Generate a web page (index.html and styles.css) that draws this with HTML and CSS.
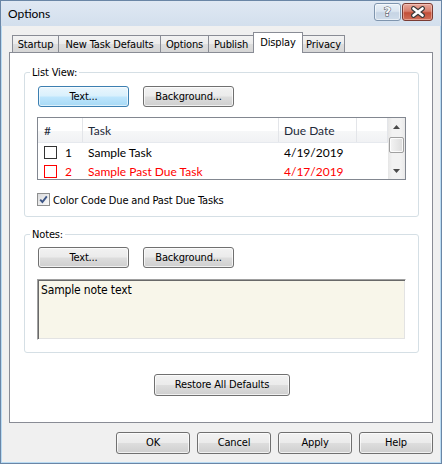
FILE: index.html
```html
<!DOCTYPE html>
<html>
<head>
<meta charset="utf-8">
<title>Options</title>
<link rel="stylesheet" href="styles.css">
</head>
<body>
<div class="window">
  <div class="titlebar">
    <span class="title">Options</span>
    <div class="caps">
      <div class="cap help"><span class="q">?</span></div>
      <div class="cap close">
        <svg width="18" height="12" viewBox="0 0 18 12">
          <path d="M4.5 2.5 L13.5 9.5 M13.5 2.5 L4.5 9.5" stroke="#3a3a3a" stroke-width="4.8" stroke-linecap="round" fill="none"/>
          <path d="M4.5 2.5 L13.5 9.5 M13.5 2.5 L4.5 9.5" stroke="#ffffff" stroke-width="2.6" stroke-linecap="round" fill="none"/>
        </svg>
      </div>
    </div>
  </div>

  <div class="client">
    <div class="tabs">
      <div class="tab w-startup">Startup</div>
      <div class="tab w-ntd">New Task Defaults</div>
      <div class="tab w-options">Options</div>
      <div class="tab w-publish">Publish</div>
      <div class="tab w-display active">Display</div>
      <div class="tab w-privacy">Privacy</div>
    </div>

    <div class="panel">
      <fieldset class="group g-list">
        <legend>List View:</legend>
        <div class="btn-row">
          <button class="btn btn-text focused">Text...</button>
          <button class="btn btn-bg">Background...</button>
        </div>
        <div class="listview">
          <div class="lv-main">
            <div class="lv-head">
              <div class="hc c-num">#</div>
              <div class="hc c-task">Task</div>
              <div class="hc c-due">Due Date</div>
              <div class="hc c-fill"></div>
            </div>
            <div class="lv-row">
              <div class="c-num"><span class="rcb"></span><span>1</span></div>
              <div class="c-task">Sample Task</div>
              <div class="c-due">4/19/2019</div>
            </div>
            <div class="lv-row late">
              <div class="c-num"><span class="rcb"></span><span>2</span></div>
              <div class="c-task">Sample Past Due Task</div>
              <div class="c-due">4/17/2019</div>
            </div>
          </div>
          <div class="vscroll">
            <div class="sb-btn">
              <svg width="7" height="4" viewBox="0 0 7 4"><path d="M0 4 L3.5 0 L7 4 Z" fill="#4a4a4a"/></svg>
            </div>
            <div class="sb-track"><div class="sb-thumb"></div></div>
            <div class="sb-btn">
              <svg width="7" height="4" viewBox="0 0 7 4"><path d="M0 0 L7 0 L3.5 4 Z" fill="#4a4a4a"/></svg>
            </div>
          </div>
        </div>
        <div class="check-row">
          <span class="cb">
            <svg width="11" height="11" viewBox="0 0 11 11"><path d="M2.2 5.6 L4.4 8 L8.8 2.4" stroke="#3d5687" stroke-width="1.9" fill="none"/></svg>
          </span>
          <span class="check-label">Color Code Due and Past Due Tasks</span>
        </div>
      </fieldset>

      <fieldset class="group g-notes">
        <legend>Notes:</legend>
        <div class="btn-row">
          <button class="btn btn-text">Text...</button>
          <button class="btn btn-bg">Background...</button>
        </div>
        <div class="notes">Sample note text</div>
      </fieldset>

      <div class="restore-row">
        <button class="btn btn-restore">Restore All Defaults</button>
      </div>
    </div>

    <div class="footer">
      <button class="btn btn-foot">OK</button>
      <button class="btn btn-foot">Cancel</button>
      <button class="btn btn-foot">Apply</button>
      <button class="btn btn-foot">Help</button>
    </div>
  </div>
</div>
</body>
</html>
```

FILE: styles.css
```css
* {
  box-sizing: border-box;
}

html, body {
  margin: 0;
  padding: 0;
}

body {
  width: 442px;
  height: 464px;
  overflow: hidden;
  background: #ffffff;
  font-family: "DejaVu Sans Condensed", "DejaVu Sans", sans-serif;
  font-size: 11px;
  letter-spacing: -0.15px;
  color: #000000;
}

.window {
  width: 442px;
  height: 464px;
  border: 1px solid #6a86a6;
  box-shadow: inset 0 0 0 1px #b9dbf3;
  background: #f0f0f0;
  display: flex;
  flex-direction: column;
}

/* ---------- title bar ---------- */
.titlebar {
  height: 25px;
  flex: none;
  display: flex;
  justify-content: space-between;
  align-items: flex-start;
  padding: 0 8px 0 7px;
  background: linear-gradient(#dfe8f3, #d3dfed);
}

.title {
  font-family: Lato, "Liberation Sans", sans-serif;
  font-size: 12px;
  letter-spacing: 0;
  line-height: 16px;
  margin-top: 5px;
  color: #000;
}

.caps {
  display: flex;
  gap: 1px;
  margin-top: 2px;
}

.cap {
  height: 18px;
  border-radius: 3px;
  display: flex;
  align-items: center;
  justify-content: center;
}

.help {
  width: 27px;
  border: 1px solid #7f95ae;
  background: linear-gradient(#e9f0f7 0%, #dbe5f0 45%, #c6d4e4 55%, #cfdcea 100%);
  box-shadow: inset 0 0 0 1px rgba(255, 255, 255, 0.55);
}

.q {
  font-family: "DejaVu Sans", sans-serif;
  font-weight: bold;
  font-size: 13px;
  line-height: 14px;
  letter-spacing: 0;
  color: #f4f6f8;
  -webkit-text-stroke: 1px #4a4f57;
  paint-order: stroke fill;
}

.close {
  width: 31px;
  border: 1px solid #7a3b33;
  background: linear-gradient(#e8a99d 0%, #d77e6d 45%, #c24f38 55%, #d0705a 100%);
  box-shadow: inset 0 0 0 1px rgba(255, 220, 210, 0.45);
}

.close svg {
  display: block;
}

/* ---------- client ---------- */
.client {
  flex: 1;
  display: flex;
  flex-direction: column;
  padding: 6px 8px 0 8px;
}

.tabs {
  height: 20px;
  display: flex;
  align-items: flex-end;
  padding-left: 3px;
}

.tab {
  height: 17px;
  border: 1px solid #898c95;
  border-bottom: none;
  background: linear-gradient(#f3f3f3 0%, #ebebeb 50%, #dedede 50%, #d6d6d6 100%);
  text-align: center;
  padding-top: 1px;
  line-height: 15px;
  white-space: nowrap;
}

.tab + .tab {
  margin-left: -1px;
}

.tab.active {
  height: 21px;
  margin-bottom: -1px;
  background: #ffffff;
  padding-top: 2px;
  position: relative;
  z-index: 1;
}

.w-startup { width: 47px; }
.w-ntd { width: 103px; }
.w-options { width: 49px; }
.w-publish { width: 46px; }
.w-display { width: 50px; }
.w-privacy { width: 43px; }

.panel {
  height: 371px;
  flex: none;
  border: 1px solid #898c95;
  background: #ffffff;
  padding: 0 13px 0 14px;
  display: flex;
  flex-direction: column;
}

/* ---------- group boxes ---------- */
.group {
  margin: 0;
  min-width: 0;
  border: 1px solid #d5dfe5;
  border-radius: 3px;
  padding: 7px 12px 10px 13px;
}

.group legend {
  padding: 0 2px;
  margin-left: -8px;
  line-height: 13px;
  font-size: 11px;
}

.g-list {
  margin-top: 13px;
}

.g-notes {
  margin-top: 11px;
  padding-top: 6px;
  padding-bottom: 12px;
}

.btn-row {
  display: flex;
  gap: 14px;
}

.btn {
  height: 21px;
  padding: 0;
  margin: 0;
  border: 1px solid #707070;
  border-radius: 3px;
  background: linear-gradient(#f2f2f2 0%, #ebebeb 48%, #dddddd 52%, #cfcfcf 100%);
  box-shadow: inset 0 0 0 1px rgba(255, 255, 255, 0.7);
  font-family: inherit;
  font-size: 11px;
  letter-spacing: -0.15px;
  color: #000000;
  line-height: 19px;
  text-align: center;
}

.btn.focused {
  border-color: #3c7fb1;
  background: linear-gradient(#eaf6fd 0%, #d9f0fc 48%, #bee6fd 52%, #a7d9f5 100%);
  box-shadow: inset 0 0 0 1px rgba(255, 255, 255, 0.6);
}

.btn-text { width: 91px; }
.btn-bg { width: 91px; }

/* ---------- list view ---------- */
.listview {
  margin: 10px 0 0 -1px;
  height: 63px;
  border: 1px solid #828790;
  display: flex;
  overflow: hidden;
  background: #ffffff;
}

.lv-main {
  flex: 1;
  min-width: 0;
  font-family: Lato, "Liberation Sans", sans-serif;
  font-size: 12px;
  letter-spacing: 0;
}

.lv-head {
  display: flex;
  height: 25px;
  border-bottom: 1px solid #e6e9ee;
  background: linear-gradient(#ffffff 0%, #ffffff 55%, #f6f7f8 55%, #f1f2f4 100%);
}

.hc {
  border-right: 1px solid #e3e5e9;
  line-height: 24px;
  padding-top: 1px;
  color: #1e2a3a;
}

.c-num {
  width: 45px;
  flex: none;
  padding-left: 6px;
  display: flex;
  align-items: center;
}

.c-task {
  width: 196px;
  flex: none;
  padding-left: 5px;
}

.c-due {
  width: 78px;
  flex: none;
  padding-left: 5px;
}

.c-fill {
  flex: 1;
}

.lv-row {
  display: flex;
  height: 19px;
  line-height: 19px;
}

.rcb {
  width: 13px;
  height: 13px;
  border: 1px solid #333333;
  background: #ffffff;
  margin-right: 8px;
}

.lv-row.late {
  color: #ff0000;
}

.lv-row.late .rcb {
  border-color: #ff0000;
}

.vscroll {
  width: 17px;
  flex: none;
  display: flex;
  flex-direction: column;
  background: linear-gradient(90deg, #e6e6e6 0%, #f2f2f2 25%, #f2f2f2 75%, #e9e9e9 100%);
}

.sb-btn {
  height: 17px;
  flex: none;
  display: flex;
  align-items: center;
  justify-content: center;
}

.sb-btn svg {
  display: block;
}

.sb-track {
  flex: 1;
  padding: 2px 1px 0 1px;
}

.sb-thumb {
  height: 16px;
  border: 1px solid #a0a0a0;
  border-radius: 2px;
  background: linear-gradient(90deg, #f4f4f4 0%, #e8e8e8 50%, #dcdcdc 100%);
  box-shadow: inset 0 0 0 1px rgba(255, 255, 255, 0.8);
}

/* ---------- checkbox ---------- */
.check-row {
  margin: 13px 0 0 -1px;
  height: 13px;
  display: flex;
  align-items: center;
}

.cb {
  width: 13px;
  height: 13px;
  flex: none;
  border: 1px solid #8e8f8f;
  background: linear-gradient(135deg, #d9dadc 0%, #eeeeee 60%, #f8f8f8 100%);
  display: flex;
  align-items: center;
  justify-content: center;
}

.cb svg {
  display: block;
}

.check-label {
  margin-left: 3px;
  line-height: 13px;
  padding-top: 1px;
}

/* ---------- notes ---------- */
.notes {
  margin: 11px 0 0 -1px;
  height: 61px;
  border: 1px solid;
  border-color: #a0a0a0 #ffffff #ffffff #a0a0a0;
  box-shadow: inset 1px 1px 0 #696969, inset -1px -1px 0 #e3e3e3;
  background: #f8f6ea;
  padding: 3px 3px 0 3px;
  font-size: 12px;
  line-height: 14px;
}

/* ---------- restore ---------- */
.restore-row {
  margin-top: 21px;
  display: flex;
  justify-content: center;
  padding-left: 1px;
}

.btn-restore {
  width: 136px;
  height: 22px;
  line-height: 20px;
}

/* ---------- footer ---------- */
.footer {
  margin-top: 9px;
  display: flex;
  justify-content: flex-end;
  gap: 7px;
}

.btn-foot {
  width: 74px;
  height: 22px;
  line-height: 20px;
}
```
